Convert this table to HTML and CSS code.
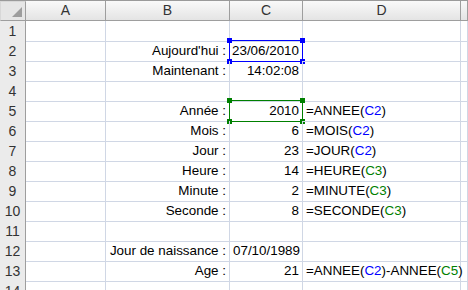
FILE: index.html
```html
<!DOCTYPE html>
<html lang="fr">
<head>
    <meta charset="UTF-8">
    <title>Fonctions date et heure</title>
    <link rel="stylesheet" href="styles.css">
</head>
<body>
    <div class="sheet">
        <div class="row head">
            <div class="corner"><span class="tri"></span></div>
            <div class="col">A</div>
            <div class="col">B</div>
            <div class="col">C</div>
            <div class="col">D</div>
            <div class="col"></div>
        </div>

        <div class="row"><div class="num">1</div><div class="c"></div><div class="c"></div><div class="c"></div><div class="c"></div><div class="c"></div></div>
        <div class="row"><div class="num">2</div><div class="c"></div><div class="c r">Aujourd'hui :</div><div class="c r sel blue">23/06/2010<i class="h tl"></i><i class="h tr"></i><i class="h bl"></i><i class="h br"></i></div><div class="c"></div><div class="c"></div></div>
        <div class="row"><div class="num">3</div><div class="c"></div><div class="c r">Maintenant :</div><div class="c r">14:02:08</div><div class="c"></div><div class="c"></div></div>
        <div class="row"><div class="num">4</div><div class="c"></div><div class="c"></div><div class="c"></div><div class="c"></div><div class="c"></div></div>
        <div class="row"><div class="num">5</div><div class="c"></div><div class="c r">Année :</div><div class="c r sel green">2010<i class="h tl"></i><i class="h tr"></i><i class="h bl"></i><i class="h br"></i></div><div class="c f">=ANNEE(<span class="ref2">C2</span>)</div><div class="c"></div></div>
        <div class="row"><div class="num">6</div><div class="c"></div><div class="c r">Mois :</div><div class="c r">6</div><div class="c f">=MOIS(<span class="ref2">C2</span>)</div><div class="c"></div></div>
        <div class="row"><div class="num">7</div><div class="c"></div><div class="c r">Jour :</div><div class="c r">23</div><div class="c f">=JOUR(<span class="ref2">C2</span>)</div><div class="c"></div></div>
        <div class="row"><div class="num">8</div><div class="c"></div><div class="c r">Heure :</div><div class="c r">14</div><div class="c f">=HEURE(<span class="ref3">C3</span>)</div><div class="c"></div></div>
        <div class="row"><div class="num">9</div><div class="c"></div><div class="c r">Minute :</div><div class="c r">2</div><div class="c f">=MINUTE(<span class="ref3">C3</span>)</div><div class="c"></div></div>
        <div class="row"><div class="num">10</div><div class="c"></div><div class="c r">Seconde :</div><div class="c r">8</div><div class="c f">=SECONDE(<span class="ref3">C3</span>)</div><div class="c"></div></div>
        <div class="row"><div class="num">11</div><div class="c"></div><div class="c"></div><div class="c"></div><div class="c"></div><div class="c"></div></div>
        <div class="row"><div class="num">12</div><div class="c"></div><div class="c r">Jour de naissance :</div><div class="c l">07/10/1989</div><div class="c"></div><div class="c"></div></div>
        <div class="row"><div class="num">13</div><div class="c"></div><div class="c r">Age :</div><div class="c r">21</div><div class="c f">=ANNEE(<span class="ref2">C2</span>)-ANNEE(<span class="ref3">C5</span>)</div><div class="c"></div></div>
        <div class="row"><div class="num">14</div><div class="c"></div><div class="c"></div><div class="c"></div><div class="c"></div><div class="c"></div></div>
    </div>
</body>
</html>
```

FILE: styles.css
```css
* {
    box-sizing: border-box;
}

body {
    margin: 0;
    background: #ffffff;
    font-family: 'Liberation Sans', Arial, sans-serif;
    font-size: 13.4px;
    color: #000000;
    overflow: hidden;
}

.sheet {
    width: 468px;
    border-top: 1px solid #9a9a9a;
}

.row {
    display: grid;
    grid-template-columns: 26px 80px 124px 73px 158px 1fr;
    height: 20px;
}

/* en-têtes de colonnes */
.col, .corner {
    background: linear-gradient(#f9f9f9, #e4e4e4);
    border-right: 1px solid #9e9e9e;
    border-bottom: 1px solid #9e9e9e;
    color: #333333;
    text-align: center;
    line-height: 19px;
    font-size: 14px;
}

.corner {
    position: relative;
    background: #e6e6e6;
    border: 1px solid #d8d8d8;
    border-right-color: #9e9e9e;
    border-bottom-color: #9e9e9e;
}

.tri {
    position: absolute;
    right: 3px;
    bottom: 3px;
    width: 0;
    height: 0;
    border-left: 10px solid transparent;
    border-bottom: 10px solid #9d9d9d;
}

/* numéros de lignes */
.num {
    background: #ebebeb;
    border-right: 1px solid #9e9e9e;
    border-bottom: 1px solid #bdbdbd;
    color: #333333;
    text-align: center;
    line-height: 20px;
    font-size: 14px;
}

.c {
    position: relative;
    border-right: 1px solid #d0d7e5;
    border-bottom: 1px solid #d0d7e5;
    line-height: 20px;
    padding: 0 2px;
    white-space: nowrap;
}

.r {
    text-align: right;
    padding-right: 3px;
}

.l {
    text-align: left;
    padding-left: 3px;
}

.f {
    padding-left: 3px;
}

.ref2 {
    color: #0000ff;
}

.ref3 {
    color: #008000;
}

/* cadres de sélection des références */
.sel::before {
    content: "";
    position: absolute;
    left: -1px;
    top: -1px;
    right: -1px;
    bottom: -1px;
    border: 1px solid;
}

.sel.blue::before {
    border-color: #0000ff;
}

.sel.green::before {
    border-color: #008000;
}

.h {
    position: absolute;
    width: 5px;
    height: 5px;
}

.sel.blue .h {
    background: #0000ff;
}

.sel.green .h {
    background: #008000;
}

.h.tl { left: -3px; top: -3px; }
.h.tr { right: -3px; top: -3px; }
.h.bl { left: -3px; bottom: -3px; }
.h.br { right: -3px; bottom: -3px; }
```
